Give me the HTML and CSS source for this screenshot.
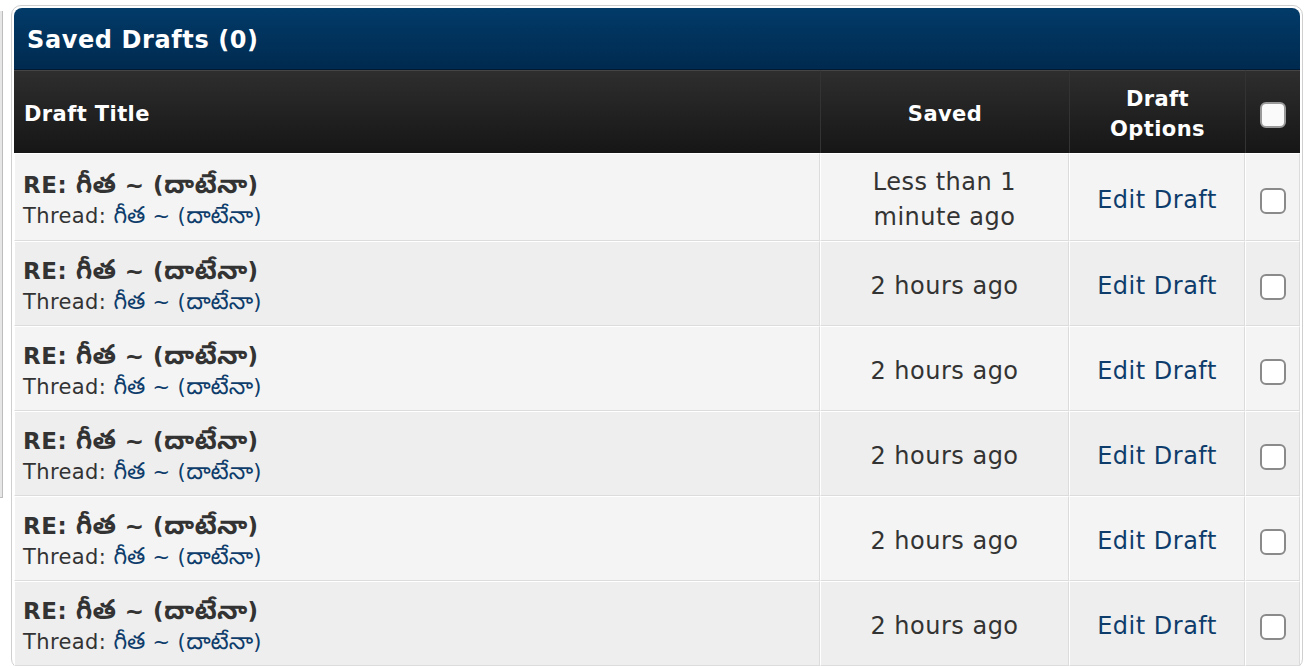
FILE: index.html
```html
<!DOCTYPE html>
<html>
<head>
<meta charset="utf-8">
<title>Saved Drafts</title>
<link rel="stylesheet" href="styles.css">
</head>
<body>
<div class="page">
  <div class="sidebar-edge"></div>
  <div class="panel">
    <div class="panel-head">Saved Drafts (0)</div>
    <table class="drafts">
      <thead>
        <tr>
          <th class="col-title">Draft Title</th>
          <th class="col-saved">Saved</th>
          <th class="col-opts">Draft<br>Options</th>
          <th class="col-check"><span class="cb cb-head"></span></th>
        </tr>
      </thead>
      <tbody>
        <tr class="odd">
          <td class="col-title"><div class="t">RE: <span class="te">గీత</span> ~ (<span class="te">దాటేనా</span>)</div><div class="th">Thread: <a href="#"><span class="te">గీత</span> ~ (<span class="te">దాటేనా</span>)</a></div></td>
          <td class="col-saved">Less than 1<br>minute ago</td>
          <td class="col-opts"><a href="#">Edit Draft</a></td>
          <td class="col-check"><span class="cb"></span></td>
        </tr>
        <tr class="even">
          <td class="col-title"><div class="t">RE: <span class="te">గీత</span> ~ (<span class="te">దాటేనా</span>)</div><div class="th">Thread: <a href="#"><span class="te">గీత</span> ~ (<span class="te">దాటేనా</span>)</a></div></td>
          <td class="col-saved">2 hours ago</td>
          <td class="col-opts"><a href="#">Edit Draft</a></td>
          <td class="col-check"><span class="cb"></span></td>
        </tr>
        <tr class="odd">
          <td class="col-title"><div class="t">RE: <span class="te">గీత</span> ~ (<span class="te">దాటేనా</span>)</div><div class="th">Thread: <a href="#"><span class="te">గీత</span> ~ (<span class="te">దాటేనా</span>)</a></div></td>
          <td class="col-saved">2 hours ago</td>
          <td class="col-opts"><a href="#">Edit Draft</a></td>
          <td class="col-check"><span class="cb"></span></td>
        </tr>
        <tr class="even">
          <td class="col-title"><div class="t">RE: <span class="te">గీత</span> ~ (<span class="te">దాటేనా</span>)</div><div class="th">Thread: <a href="#"><span class="te">గీత</span> ~ (<span class="te">దాటేనా</span>)</a></div></td>
          <td class="col-saved">2 hours ago</td>
          <td class="col-opts"><a href="#">Edit Draft</a></td>
          <td class="col-check"><span class="cb"></span></td>
        </tr>
        <tr class="odd">
          <td class="col-title"><div class="t">RE: <span class="te">గీత</span> ~ (<span class="te">దాటేనా</span>)</div><div class="th">Thread: <a href="#"><span class="te">గీత</span> ~ (<span class="te">దాటేనా</span>)</a></div></td>
          <td class="col-saved">2 hours ago</td>
          <td class="col-opts"><a href="#">Edit Draft</a></td>
          <td class="col-check"><span class="cb"></span></td>
        </tr>
        <tr class="even">
          <td class="col-title"><div class="t">RE: <span class="te">గీత</span> ~ (<span class="te">దాటేనా</span>)</div><div class="th">Thread: <a href="#"><span class="te">గీత</span> ~ (<span class="te">దాటేనా</span>)</a></div></td>
          <td class="col-saved">2 hours ago</td>
          <td class="col-opts"><a href="#">Edit Draft</a></td>
          <td class="col-check"><span class="cb"></span></td>
        </tr>
      </tbody>
    </table>
  </div>
</div>
</body>
</html>
```
FILE: styles.css
```css
html, body {
  margin: 0;
  padding: 0;
  background: #fff;
}
body {
  font-family: "DejaVu Sans", "Noto Sans Telugu", "Noto Sans", sans-serif;
  color: #333;
  overflow: hidden;
}
.page {
  display: flex;
  align-items: flex-start;
  padding-top: 5px;
}
.sidebar-edge {
  width: 2px;
  height: 486px;
  margin-top: 6px;
  background: #e6e6e6;
  border-right: 1px solid #bdbdbd;
  border-bottom: 1px solid #bdbdbd;
  margin-right: 8px;
}
.panel {
  width: 1286px;
  border: 1px solid #cfcfcf;
  border-radius: 10px;
  padding: 2px;
  background: #fff;
}
.panel-head {
  height: 62px;
  box-sizing: border-box;
  padding: 3px 13px 0;
  display: flex;
  align-items: center;
  border-radius: 8px 8px 0 0;
  background: linear-gradient(#023b69, #002a4f);
  border-bottom: 1px solid #001a33;
  color: #fff;
  font-weight: bold;
  font-size: 24px;
  letter-spacing: 0.6px;
}
.drafts {
  width: 1286px;
  border-collapse: separate;
  border-spacing: 0;
  table-layout: fixed;
}
.drafts th {
  height: 83px;
  box-sizing: border-box;
  padding: 4px 10px 0;
  background: linear-gradient(#2e2e2e, #161616);
  border-top: 1px solid #454545;
  border-left: 1px solid #333;
  color: #fff;
  font-size: 21px;
  font-weight: bold;
  line-height: 30px;
  letter-spacing: 0.4px;
  text-align: center;
}
.drafts th:first-child { border-left: none; }
.drafts th.col-title { text-align: left; }
.col-title { width: 806px; }
.col-saved { width: 249px; }
.col-opts { width: 176px; }
.col-check { width: 55px; }
.drafts td {
  height: 67px;
  padding: 11px 8px 5px;
  border-top: 1px solid #fff;
  border-left: 1px solid #fff;
  border-bottom: 1px solid #dcdcdc;
  border-right: 1px solid #dcdcdc;
  text-align: center;
  vertical-align: middle;
  font-size: 24px;
  line-height: 35px;
  letter-spacing: 0.5px;
  color: #333;
}
.drafts tr.odd td { background: #f4f4f4; }
.drafts tr.even td { background: #eeeeee; }
.drafts td.col-title { text-align: left; }
.t {
  font-weight: bold;
  font-size: 23px;
  line-height: 31px;
  letter-spacing: 0.5px;
}
.th {
  font-size: 21px;
  line-height: 30px;
  letter-spacing: 0.4px;
}
.te {
  font-size: 1.16em;
  line-height: 1;
  letter-spacing: 0.2px;
}
.th .te {
  font-size: 1.12em;
  letter-spacing: 0;
}
a {
  color: #0e3d6c;
  text-decoration: none;
}
.cb {
  display: inline-block;
  width: 22px;
  height: 22px;
  border: 2px solid #8a8a8a;
  border-radius: 6px;
  background: #fff;
  vertical-align: middle;
}
.cb-head {
  border-color: #999;
  background: #fafafa;
}
```
